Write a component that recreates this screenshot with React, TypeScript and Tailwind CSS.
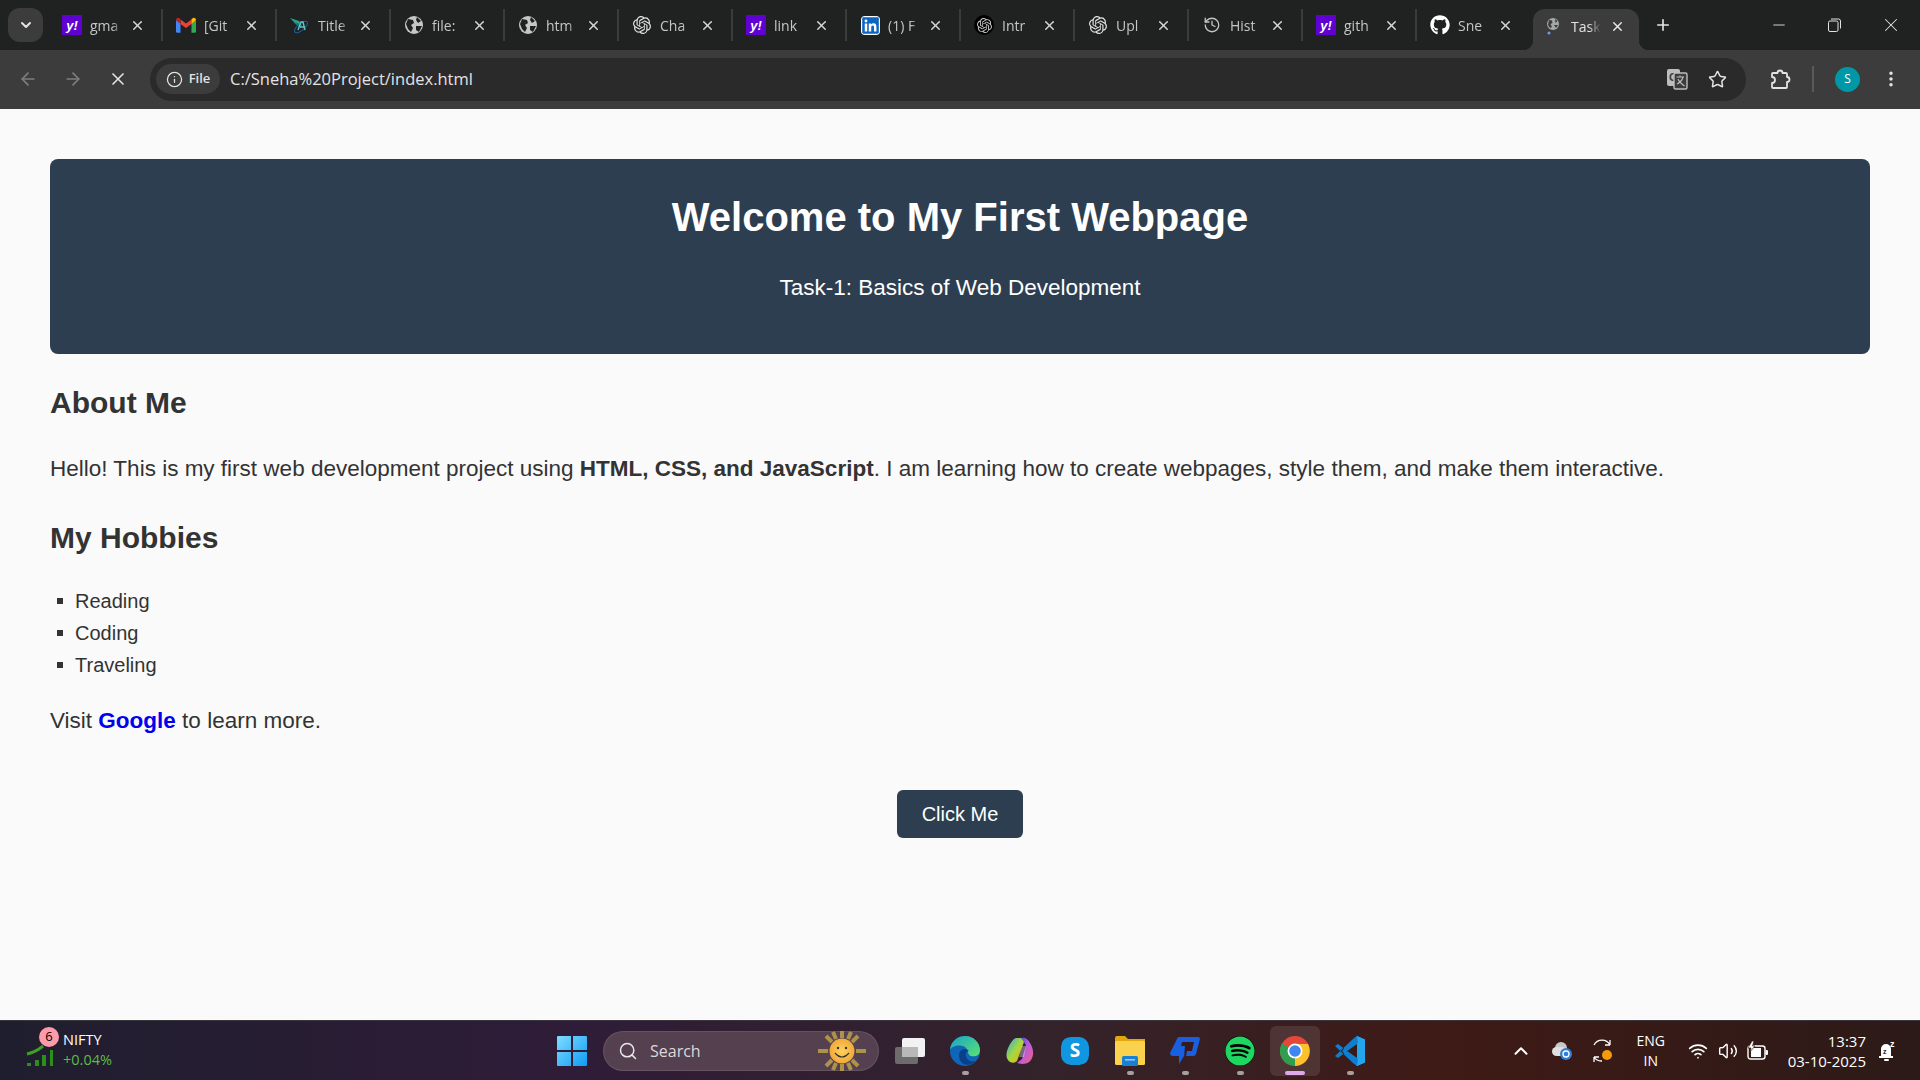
import React from "react";
import {
  ArrowLeft,
  ArrowRight,
  ChevronDown,
  ChevronUp,
  History,
  Info,
  Minus,
  MoreVertical,
  Plus,
  Search,
  Star,
  Volume2,
  Wifi,
  X,
} from "lucide-react";
import { FaGithub, FaSpotify, FaLinkedin, FaSkype } from "react-icons/fa";
import { SiOpenai } from "react-icons/si";

const YahooIcon = () => (
  <span className="flex h-5 w-5 items-center justify-center bg-[#5f01d1] font-['Liberation_Sans',sans-serif] text-[13px] leading-none font-bold italic text-white">
    y!
  </span>
);

const GmailIcon = () => (
  <svg width="20" height="16" viewBox="0 0 20 16">
    <path d="M0 3 V14.5 a1.3 1.3 0 0 0 1.3 1.3 H4.5 V6.5z" fill="#4285f4" />
    <path d="M20 3 V14.5 a1.3 1.3 0 0 1 -1.3 1.3 H15.5 V6.5z" fill="#34a853" />
    <path d="M4.5 7 L10 11 L15.5 7 V2.6 L10 6.6 L4.5 2.6z" fill="#ea4335" />
    <path d="M0 3 a2.2 2.2 0 0 1 3.6 -1.6 L4.5 2.1 V7z" fill="#c5221f" />
    <path d="M20 3 a2.2 2.2 0 0 0 -3.6 -1.6 L15.5 2.1 V7z" fill="#fbbc04" />
  </svg>
);

const TitleIcon = () => (
  <svg width="20" height="20" viewBox="0 0 20 20">
    <path d="M0 3 L9 6 L12 11 L6 9z" fill="#2aa58c" />
    <path d="M3 7 L8 8 L9 12z" fill="#1d7f70" />
    <ellipse cx="11" cy="12" rx="8" ry="3.4" transform="rotate(-40 11 12)" fill="none" stroke="#1f5f9a" strokeWidth="1" />
    <path d="M8 15 L11 7 L13 7 L15 15 M10 12 H14" fill="none" stroke="#5ec8c8" strokeWidth="1.4" />
  </svg>
);

const GlobeIcon = () => (
  <svg width="18" height="18" viewBox="0 0 18 18">
    <circle cx="9" cy="9" r="9" fill="#c4c7c5" />
    <path d="M3 3 L8 4 L9 7 L6 9 L8 12 L6 16 L3 13 L1 8z M12 1 L16 5 L13 7 L11 4z M11 10 L17 10 L14 16 L11 14z" fill="#202222" />
  </svg>
);

const OpenAiIcon = ({ dark }: { dark?: boolean }) =>
  dark ? (
    <span className="flex h-5 w-5 items-center justify-center rounded-full bg-black">
      <SiOpenai size={15} className="text-[#c8c8c8]" />
    </span>
  ) : (
    <SiOpenai size={18} className="text-[#e3e3e3]" />
  );

const LoadingGlobe = () => (
  <svg width="14" height="18" viewBox="0 0 14 18">
    <circle cx="7" cy="7" r="6" fill="#a5a8a8" />
    <path d="M3 3 L6 3.5 L6.5 6 L4.5 7 L6 10 L4 11 L2 8z M9 2 L11.5 4 L9.5 6z M8 8 L12 8 L10 11z" fill="#3c3c3c" />
    <circle cx="3" cy="16" r="1.5" fill="#6f9be8" />
  </svg>
);

const tabs: { icon: React.ReactNode; label: string }[] = [
  { icon: <YahooIcon />, label: "gma" },
  { icon: <GmailIcon />, label: "[Git" },
  { icon: <TitleIcon />, label: "Title" },
  { icon: <GlobeIcon />, label: "file:" },
  { icon: <GlobeIcon />, label: "htm" },
  { icon: <OpenAiIcon />, label: "Cha" },
  { icon: <YahooIcon />, label: "link" },
  { icon: <FaLinkedin size={19} className="rounded-sm bg-white text-[#0a66c2]" />, label: "(1) F" },
  { icon: <OpenAiIcon dark />, label: "Intr" },
  { icon: <OpenAiIcon />, label: "Upl" },
  { icon: <History size={18} strokeWidth={1.7} className="text-[#c4c7c5]" />, label: "Hist" },
  { icon: <YahooIcon />, label: "gith" },
  { icon: <FaGithub size={20} className="text-white" />, label: "Sne" },
];

const Tab = ({ icon, label, last }: { icon: React.ReactNode; label: string; last?: boolean }) => (
  <div className={`flex h-[32px] w-[114px] shrink-0 items-center pl-[13px] ${last ? "" : "border-r-2 border-[#3a3c3c]"}`}>
    <span className="flex w-5 shrink-0 justify-center">{icon}</span>
    <span className="ml-[8px] w-[32px] text-[14px] whitespace-nowrap text-[#c4c7c5] [mask-image:linear-gradient(to_right,black_70%,transparent)]">
      {label}
    </span>
    <X size={15} strokeWidth={2.4} className="ml-[8px] shrink-0 text-[#d5d7d6]" />
  </div>
);

const TabStrip = () => (
  <div className="flex h-[50px] items-center bg-[#202222] pl-[8px] font-['Open_Sans',sans-serif]">
    <div className="flex h-[34px] w-[35px] shrink-0 items-center justify-center rounded-xl bg-[#3c3c3c]">
      <ChevronDown size={16} strokeWidth={3} className="text-[#e3e3e3]" />
    </div>
    <div className="ml-[6px] flex items-center">
      {tabs.map((t, i) => (
        <Tab key={t.label} icon={t.icon} label={t.label} last={i === tabs.length - 1} />
      ))}
    </div>
    <div className="relative ml-[2px] flex h-[41px] w-[106px] shrink-0 items-center self-end rounded-t-xl bg-[#3c3c3c] pb-[7px] pl-[13px]">
      <span className="absolute bottom-0 left-[-10px] h-[10px] w-[10px] bg-[radial-gradient(circle_at_0_0,transparent_10px,#3c3c3c_10.5px)]" />
      <span className="absolute right-[-10px] bottom-0 h-[10px] w-[10px] bg-[radial-gradient(circle_at_100%_0,transparent_10px,#3c3c3c_10.5px)]" />
      <LoadingGlobe />
      <span className="ml-[11px] w-[30px] text-[14px] text-[#e3e3e3] [mask-image:linear-gradient(to_right,black_60%,transparent)]">
        Task
      </span>
      <X size={15} strokeWidth={2.4} className="ml-[9px] shrink-0 text-[#e3e3e3]" />
    </div>
    <Plus size={18} strokeWidth={2.2} className="ml-[15px] text-[#e3e3e3]" />
    <div className="ml-auto flex items-center text-[#e3e3e3]">
      <div className="flex w-[56px] justify-center">
        <Minus size={18} strokeWidth={1.2} />
      </div>
      <div className="flex w-[55px] justify-center">
        <svg width="13" height="14" viewBox="0 0 13 14" fill="none" stroke="currentColor">
          <rect x="0.5" y="3" width="9.5" height="10.5" rx="1.5" />
          <path d="M3 1 H10.5 a2 2 0 0 1 2 2 V10.5" />
        </svg>
      </div>
      <div className="flex w-[58px] justify-center">
        <X size={22} strokeWidth={1.1} />
      </div>
    </div>
  </div>
);

const TranslateIcon = () => (
  <svg width="22" height="22" viewBox="0 0 22 22">
    <rect x="1" y="1" width="13" height="17" rx="2" fill="#bdbdbd" />
    <text x="3" y="13" fontSize="11" fontWeight="700" fontFamily="Liberation Sans" fill="#3c3c3c">G</text>
    <rect x="8" y="5" width="13" height="16" rx="1.5" fill="#3c3c3c" stroke="#bdbdbd" strokeWidth="1.4" />
    <path d="M10.5 9 H18 M14 7.5 V9 M17 9 C16 13 13 15 11 16 M12 11 C13 14 16 16 18.5 18" fill="none" stroke="#bdbdbd" strokeWidth="1.1" />
  </svg>
);

const ExtensionIcon = () => (
  <svg width="22" height="24" viewBox="0 0 22 24" fill="none" stroke="#e3e3e3" strokeWidth="1.8" strokeLinejoin="round">
    <path d="M3 6 H7.5 a2.5 2.5 0 0 1 5 0 H16 a1 1 0 0 1 1 1 V10 a2.5 2.5 0 0 1 0 5 V20 a1 1 0 0 1-1 1 H3 a1 1 0 0 1-1-1 V16 a3 3 0 0 0 0-6 V7 a1 1 0 0 1 1-1z" />
  </svg>
);

const Toolbar = () => (
  <div className="flex h-[59px] items-center bg-[#3c3c3c] pb-[1px] font-['Open_Sans',sans-serif]">
    <ArrowLeft size={20} strokeWidth={2} className="ml-[18px] text-[#7e7e7e]" />
    <ArrowRight size={20} strokeWidth={2} className="ml-[25px] text-[#7e7e7e]" />
    <X size={20} strokeWidth={2} className="ml-[25px] text-[#e3e3e3]" />
    <div className="ml-[22px] flex h-[43px] w-[1596px] items-center rounded-full bg-[#2a2a2a] pl-[6px]">
      <div className="flex h-[30px] w-[64px] items-center justify-center rounded-full bg-[#3c3c3c]">
        <Info size={17} strokeWidth={1.8} className="text-[#e3e3e3]" />
        <span className="ml-[6px] text-[13px] font-semibold text-[#e3e3e3]">File</span>
      </div>
      <span className="ml-[10px] text-[16.5px] text-[#e3e3e3]">C:/Sneha%20Project/index.html</span>
      <div className="ml-auto flex items-center pr-[19px]">
        <TranslateIcon />
        <Star size={19} strokeWidth={1.9} className="ml-[20px] text-[#e3e3e3]" />
      </div>
    </div>
    <span className="ml-[24px]">
      <ExtensionIcon />
    </span>
    <div className="ml-[20px] h-[26px] w-[2px] bg-[#5a5a5a]" />
    <div className="ml-[21px] flex h-[25px] w-[25px] items-center justify-center rounded-full bg-[#0097a7] text-[12px] text-white">
      S
    </div>
    <MoreVertical size={20} strokeWidth={2.2} className="ml-[21px] text-[#e3e3e3]" />
  </div>
);

const Page = () => (
  <main className="h-[911px] overflow-hidden bg-[#fafafa] px-[50px] pt-[50px] font-['Liberation_Sans',Arial,sans-serif] text-[#333333]">
    <header className="h-[195px] rounded-lg bg-[#2c3e50] pt-[35px] text-center text-white">
      <h1 className="text-[40px] leading-[46px] font-bold">Welcome to My First Webpage</h1>
      <p className="mt-[34px] text-[22.5px] leading-[28px]">Task-1: Basics of Web Development</p>
    </header>
    <h2 className="mt-[31px] text-[30px] leading-[35px] font-bold">About Me</h2>
    <p className="mt-[35px] text-[22.5px] leading-[28px]">
      Hello! This is my first web development project using <strong>HTML, CSS, and JavaScript</strong>. I am learning how to create webpages, style them, and make them interactive.
    </p>
    <h2 className="mt-[37px] text-[30px] leading-[35px] font-bold">My Hobbies</h2>
    <ul className="mt-[30px] list-none pl-[7px] text-[20px]">
      {["Reading", "Coding", "Traveling"].map((h) => (
        <li key={h} className="flex h-[32px] items-center">
          <span className="mr-[12px] h-[6px] w-[6px] shrink-0 bg-[#333333]" />
          {h}
        </li>
      ))}
    </ul>
    <p className="mt-[26px] text-[22.5px] leading-[28px]">
      Visit <a className="font-bold text-[#0000ee]">Google</a> to learn more.
    </p>
    <div className="mt-[55px] flex justify-center">
      <button className="h-[48px] w-[126px] rounded-md bg-[#2c3e50] text-[20px] text-white">Click Me</button>
    </div>
  </main>
);

const WindowsIcon = () => (
  <svg width="30" height="30" viewBox="0 0 30 30">
    <defs>
      <linearGradient id="win" x1="0" y1="0" x2="1" y2="1">
        <stop offset="0" stopColor="#7fdcff" />
        <stop offset="1" stopColor="#0f9bf5" />
      </linearGradient>
    </defs>
    <path d="M0 1 a1 1 0 0 1 1-1 H14 V14 H0z M16 0 H29 a1 1 0 0 1 1 1 V14 H16z M0 16 H14 V30 H1 a1 1 0 0 1-1-1z M16 16 H30 V29 a1 1 0 0 1-1 1 H16z" fill="url(#win)" />
  </svg>
);

const SunIcon = () => (
  <svg width="52" height="42" viewBox="0 0 52 42">
    <defs>
      <radialGradient id="sunface">
        <stop offset="0" stopColor="#ffd25a" />
        <stop offset="1" stopColor="#f0a93c" />
      </radialGradient>
    </defs>
    <g stroke="#bda24a" strokeWidth="4" opacity="0.85">
      <path d="M26 1 V8 M26 34 V41 M2 21 H12 M40 21 H50 M10 6 L16 12 M42 6 L36 12 M10 36 L16 30 M42 36 L36 30 M17 2 L20 9 M35 2 L32 9 M17 40 L20 33 M35 40 L32 33" />
    </g>
    <circle cx="26" cy="21" r="12.5" fill="url(#sunface)" />
    <circle cx="22" cy="18" r="1.2" fill="#333" />
    <circle cx="30" cy="18" r="1.2" fill="#333" />
    <path d="M19 23 Q26 31 33 23" fill="none" stroke="#333" strokeWidth="1.2" />
  </svg>
);

const TaskViewIcon = () => (
  <svg width="30" height="26" viewBox="0 0 30 26">
    <rect x="0" y="9" width="23" height="17" rx="2" fill="#6c6c6c" />
    <rect x="7" y="0" width="23" height="19" rx="2" fill="#f2f2f2" />
    <rect x="7" y="9" width="16" height="10" fill="#b8b8b8" />
  </svg>
);

const EdgeIcon = () => (
  <svg width="30" height="30" viewBox="0 0 30 30">
    <defs>
      <linearGradient id="edgeTop" x1="0" y1="0" x2="1" y2="1">
        <stop offset="0" stopColor="#1aa4c8" />
        <stop offset="1" stopColor="#5be36f" />
      </linearGradient>
    </defs>
    <circle cx="15" cy="15" r="15" fill="#0f66b8" />
    <path d="M0 14 C1 4 9 0 15 0 C24 0 30 7 30 14 C30 20 25 21 21 20 C17 19 19 14 15 11 C9 8 2 10 0 14z" fill="url(#edgeTop)" />
    <path d="M9 19 C9 13 16 11 19 15 C17 15 15 17 16 20 C17 25 23 27 26 24 C22 31 9 31 9 19z" fill="#0a3f8a" />
  </svg>
);

const CopilotIcon = () => (
  <svg width="28" height="30" viewBox="0 0 28 30">
    <defs>
      <linearGradient id="copL" x1="0" y1="0" x2="1" y2="1">
        <stop offset="0" stopColor="#2fa4f2" />
        <stop offset="0.5" stopColor="#a6d93a" />
        <stop offset="1" stopColor="#f6a623" />
      </linearGradient>
      <linearGradient id="copR" x1="0" y1="0" x2="1" y2="1">
        <stop offset="0" stopColor="#2454d8" />
        <stop offset="0.45" stopColor="#b65be2" />
        <stop offset="1" stopColor="#f2627e" />
      </linearGradient>
    </defs>
    <path d="M10 2 H17 L18 6 L11 25 C8 28 4 27 2 24 C-1 20 1 14 3 10 C5 6 7 3 10 2z" fill="url(#copL)" />
    <path d="M15 2 C19 1 22 3 24 7 C28 13 28 20 25 24 C23 27 19 28 16 28 L11 27 L16 23 L20 9z" fill="url(#copR)" />
    <path d="M16 10 L20 10 L18 21 L13 21z" fill="#f4eaff" opacity="0.35" />
  </svg>
);

const FolderIcon = () => (
  <svg width="30" height="30" viewBox="0 0 30 30">
    <path d="M0 2 a2 2 0 0 1 2-2 H10 L13 3 H30 V8 H0z" fill="#e2a60f" />
    <rect x="0" y="5" width="30" height="24" rx="1.5" fill="#fbd24e" />
    <rect x="7" y="20" width="16" height="10" rx="1.5" fill="#1b7fd4" />
    <rect x="10" y="23" width="10" height="1.6" fill="#8fcbf5" />
  </svg>
);

const PhoneLinkIcon = () => (
  <svg width="30" height="28" viewBox="0 0 30 28">
    <path d="M7 2 a2 2 0 0 1 2-2 H28 a2 2 0 0 1 2 2 L26 17 a3 3 0 0 1-3 2 H14 L9 27 L9 19 H3 a3 3 0 0 1-3-3z" fill="#1a5fe0" />
    <path d="M12 5 H24 L22 14 H17 L16 19 L14 21 L15 9 H11z" fill="#3a1a18" />
  </svg>
);

const ChromeIcon = () => (
  <svg width="30" height="30" viewBox="0 0 30 30">
    <circle cx="15" cy="15" r="15" fill="#e5483a" />
    <path d="M15 15 L2 7.5 A15 15 0 0 0 15 30 L22.5 17z" fill="#2f9e4f" />
    <path d="M15 8 H28 A15 15 0 0 1 15 30 L15 15z" fill="#fbc22d" />
    <circle cx="15" cy="15" r="7.5" fill="#ffffff" />
    <circle cx="15" cy="15" r="5.8" fill="#3f86f0" />
  </svg>
);

const VsCodeIcon = () => (
  <svg width="30" height="30" viewBox="0 0 30 30">
    <path d="M22 0 L30 3.5 V26.5 L22 30 L7 15z" fill="#0a84d6" />
    <path d="M22 0 L30 3.5 V26.5 L22 30z" fill="#24a6ef" />
    <path d="M22 8 V22 L11 15z" fill="#3a1a16" />
    <path d="M0 10 L3 8 L23 23 L22 30 L18 27z M0 20 L3 22 L23 7 L22 0 L18 3z" fill="#0e7fd0" />
  </svg>
);

const BatteryIcon = () => (
  <svg width="22" height="20" viewBox="0 0 22 20">
    <rect x="1" y="5" width="17" height="13" rx="2.5" fill="none" stroke="#fff" strokeWidth="1.4" />
    <rect x="18.5" y="9" width="2.5" height="5" rx="1" fill="#fff" />
    <path d="M4 7 H14 V16 H4z" fill="#fff" />
    <path d="M5 0 L1 7 H4 L3 11 L8 5 H5.5 L7 0z" fill="#fff" stroke="#3a1a16" strokeWidth="0.7" />
  </svg>
);

const AppSlot = ({ children, dot, active }: { children: React.ReactNode; dot?: boolean; active?: boolean }) => (
  <div className={`relative flex h-[50px] w-[50px] shrink-0 items-center justify-center rounded-md ${active ? "bg-white/10" : ""}`}>
    {children}
    {dot && (
      <span className={`absolute bottom-[1px] h-[4px] rounded-full ${active ? "w-[20px] bg-[#e0a8ea]" : "w-[7px] bg-[#a8a0a0]"}`} />
    )}
  </div>
);

const Taskbar = () => (
  <footer className="flex h-[60px] items-center border-t border-[#3a3640] bg-[linear-gradient(to_right,#1f1e2e_0%,#2f1c38_30%,#33232a_55%,#3f1a16_75%,#2c1a18_100%)] font-['Open_Sans',sans-serif] text-white">
    <div className="relative ml-[26px] flex w-[531px] shrink-0 items-center">
      <svg width="30" height="22" viewBox="0 0 30 22" className="mt-[10px]">
        <path d="M1 9 Q10 7 17 1" fill="none" stroke="#3fa024" strokeWidth="3" />
        <rect x="1" y="18" width="4" height="3" fill="#2b8f1c" />
        <rect x="9" y="15" width="4" height="6" fill="#2b8f1c" />
        <rect x="16" y="10" width="4" height="11" fill="#2b8f1c" />
        <rect x="24" y="5" width="3" height="16" fill="#2b8f1c" />
      </svg>
      <span className="absolute top-[-4px] left-[13px] flex h-[20px] w-[20px] items-center justify-center rounded-full bg-[#ff9aa8] text-[13px] text-black">
        6
      </span>
      <div className="ml-[7px] flex flex-col text-[14.5px] leading-[20px]">
        <span className="mt-[-1px]">NIFTY</span>
        <span className="text-[#5dbb46]">+0.04%</span>
      </div>
    </div>
    <div className="flex items-center">
      <WindowsIcon />
      <div className="ml-[16px] flex h-[40px] w-[276px] items-center rounded-full border border-white/10 bg-[#54404f] pl-[14px]">
        <Search size={20} strokeWidth={1.8} className="text-[#e8e8e8]" />
        <span className="ml-[12px] text-[16px] text-[#dcd8da]">Search</span>
        <span className="mr-[10px] ml-auto">
          <SunIcon />
        </span>
      </div>
      <div className="ml-[6px] flex items-center gap-[5px]">
        <AppSlot><TaskViewIcon /></AppSlot>
        <AppSlot dot><EdgeIcon /></AppSlot>
        <AppSlot><CopilotIcon /></AppSlot>
        <AppSlot>
          <span className="flex h-[28px] w-[28px] items-center justify-center rounded-[10px] bg-[#1196e0]">
            <FaSkype size={30} className="text-[#1196e0]" />
            <span className="absolute text-[19px] font-bold text-white">S</span>
          </span>
        </AppSlot>
        <AppSlot dot><FolderIcon /></AppSlot>
        <AppSlot dot><PhoneLinkIcon /></AppSlot>
        <AppSlot dot>
          <span className="flex h-[30px] w-[30px] items-center justify-center rounded-full bg-black">
            <FaSpotify size={30} className="text-[#1ed760]" />
          </span>
        </AppSlot>
        <AppSlot dot active><ChromeIcon /></AppSlot>
        <AppSlot dot><VsCodeIcon /></AppSlot>
      </div>
    </div>
    <div className="ml-auto flex items-center pr-[24px]">
      <ChevronUp size={22} strokeWidth={2.2} />
      <svg width="22" height="20" viewBox="0 0 22 20" className="ml-[19px]">
        <circle cx="10" cy="7" r="6" fill="#c8c8c8" />
        <rect x="1" y="6" width="14" height="9" rx="4.5" fill="#e0e0e0" />
        <circle cx="15" cy="13" r="6" fill="#2f7fd6" />
        <path d="M12 13 a3 3 0 0 1 6 0 M18 13 a3 3 0 0 1-6 0" fill="none" stroke="#fff" strokeWidth="1.3" />
      </svg>
      <svg width="22" height="24" viewBox="0 0 22 24" className="ml-[18px]">
        <path d="M3 6 A9 9 0 0 1 19 6 M19 6 V1 M19 6 H14 M3 18 A9 9 0 0 0 11 22 M3 18 V23 M3 18 H8" fill="none" stroke="#fff" strokeWidth="1.3" />
        <circle cx="16" cy="16" r="5" fill="#f59a0c" />
      </svg>
      <div className="ml-[18px] flex w-[40px] flex-col items-center text-[14px] leading-[20px]">
        <span>ENG</span>
        <span>IN</span>
      </div>
      <Wifi size={20} strokeWidth={2} className="ml-[17px]" />
      <Volume2 size={20} strokeWidth={1.7} className="ml-[10px]" />
      <span className="ml-[9px]">
        <BatteryIcon />
      </span>
      <div className="ml-[19px] flex flex-col items-end text-[15px] leading-[20px]">
        <span>13:37</span>
        <span>03-10-2025</span>
      </div>
      <svg width="18" height="22" viewBox="0 0 18 22" className="ml-[12px]">
        <path d="M3 16 V9 a5 5 0 0 1 10 0 V16 H15 V18 H1 V16z" fill="#fff" />
        <rect x="6" y="19" width="5" height="2" rx="1" fill="#fff" />
        <text x="5" y="14" fontSize="7" fontFamily="Liberation Sans" fontWeight="700" fill="#3a1a16">z</text>
        <text x="12" y="7" fontSize="9" fontFamily="Liberation Sans" fontWeight="700" fill="#fff">z</text>
      </svg>
    </div>
  </footer>
);

export default function App() {
  return (
    <div className="h-[1080px] w-[1920px] overflow-hidden">
      <TabStrip />
      <Toolbar />
      <Page />
      <Taskbar />
    </div>
  );
}
